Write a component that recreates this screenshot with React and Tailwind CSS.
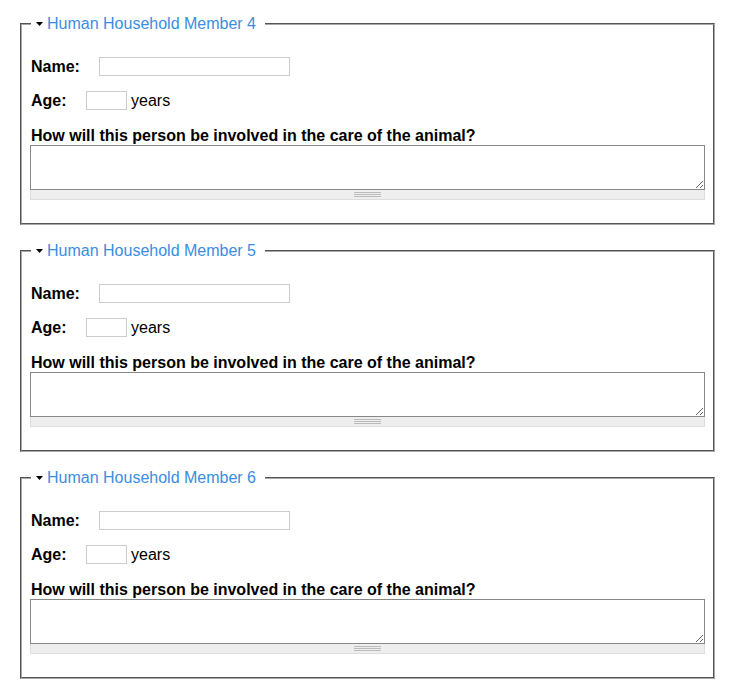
import React from 'react';

function Grippie() {
  return (
    <div className="flex h-[10px] items-center justify-center border border-t-0 border-[#ddd] bg-[#eee]">
      <div className="flex w-[27px] flex-col gap-px">
        <div className="h-px bg-[#bbb]" />
        <div className="h-px bg-[#bbb]" />
        <div className="h-px bg-[#bbb]" />
      </div>
    </div>
  );
}

function MemberFieldset({ n }) {
  return (
    <fieldset className="mb-[17px] ml-5 w-[695px] border-2 border-[#a8a8a8] [border-style:groove] px-2 pb-[23px] pt-0">
      <legend className="ml-px pl-[5px] pr-[9px] text-[16px] leading-[18px] text-[#3b8de2]">
        <span className="flex items-center">
          <svg width="8" height="5" viewBox="0 0 8 5" className="mr-[3px] mt-px">
            <path d="M0 0h7L3.5 4z" fill="#000" />
          </svg>
          Human Household Member {n}
        </span>
      </legend>

      <div className="mt-[24px] flex items-center text-[16px] font-bold leading-[18px] text-black">
        <label className="w-[69px] pl-px">Name:</label>
        <input type="text" className="h-[19px] w-[191px] border border-[#ccc] bg-white outline-none" />
      </div>

      <div className="mt-[15px] flex items-center text-[16px] leading-[18px] text-black">
        <label className="w-[56px] pl-px font-bold">Age:</label>
        <input type="text" className="h-[19px] w-[41px] border border-[#ccc] bg-white outline-none" />
        <span className="ml-[4px]">years</span>
      </div>

      <div className="mt-[17px] pl-px text-[16px] font-bold leading-[18px] text-black">
        How will this person be involved in the care of the animal?
      </div>
      <div>
        <textarea className="block h-[45px] w-full resize-y border border-[#888] bg-white outline-none" />
        <Grippie />
      </div>
    </fieldset>
  );
}

export default function App() {
  return (
    <div className="min-h-screen bg-white pt-[15px] font-['Liberation_Sans',Arial,sans-serif]">
      {[4, 5, 6].map((n) => (
        <MemberFieldset key={n} n={n} />
      ))}
    </div>
  );
}
